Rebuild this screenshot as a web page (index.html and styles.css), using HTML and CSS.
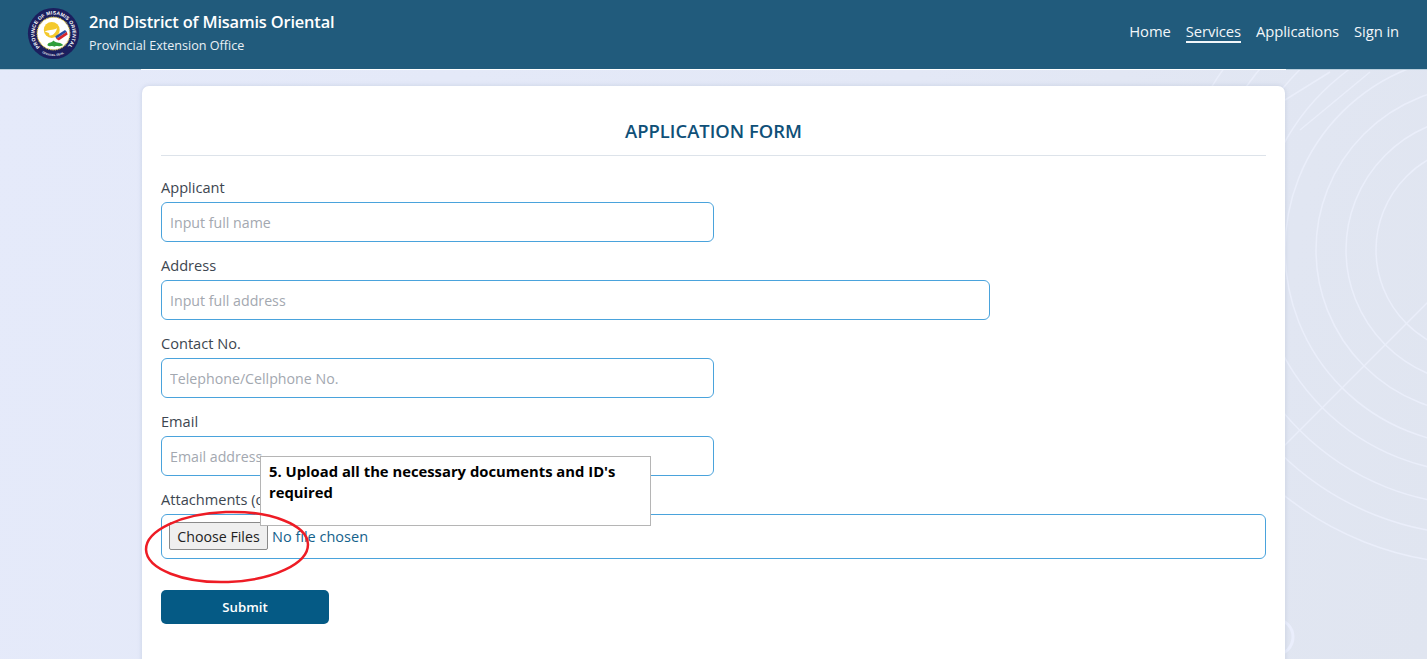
FILE: index.html
```html
<!DOCTYPE html>
<html lang="en">
<head>
<meta charset="utf-8">
<title>Application Form</title>
<link rel="stylesheet" href="styles.css">
</head>
<body>
<svg class="backdrop" viewBox="0 0 1427 659" aria-hidden="true">
  <g fill="none" stroke="#eaeefa" stroke-width="1.5">
    <circle cx="1480" cy="250" r="104"/><circle cx="1480" cy="250" r="134"/><circle cx="1480" cy="250" r="164"/>
    <circle cx="1480" cy="250" r="195"/><circle cx="1480" cy="250" r="223"/><circle cx="1480" cy="250" r="255"/>
    <circle cx="1480" cy="250" r="285"/><circle cx="1480" cy="250" r="314"/>
    <path d="M1270 460 L1480 250"/>
    <path d="M1285 100 L1330 72M1300 130 L1370 72"/>
  </g>
  <circle cx="1275" cy="637" r="18" fill="none" stroke="#eaeefc" stroke-width="3"/>
</svg>

<header class="topbar">
  <div class="brand">
    <svg class="logo" viewBox="0 0 60 60" role="img" aria-label="Province of Misamis Oriental seal">
      <defs>
        <path id="seal-top" d="M14.7 45.3 A21.6 21.6 0 1 1 45.3 45.3"/>
        <path id="seal-bottom" d="M11 47 A25.5 25.5 0 0 0 49 47"/>
      </defs>
      <circle cx="30" cy="30" r="29" fill="#1b1f5e"/>
      <circle cx="30" cy="30" r="18.5" fill="#fff" stroke="#f2d84a" stroke-width="1.5" stroke-dasharray="1 1"/>
      <text class="seal-text"><textPath href="#seal-top" textLength="100">PROVINCE OF MISAMIS ORIENTAL</textPath></text>
      <text class="seal-small"><textPath href="#seal-bottom" startOffset="18%" textLength="26">OFFICIAL SEAL</textPath></text>
      <circle cx="28" cy="26" r="9" fill="#f4c92c"/>
      <path d="M20 28 C24 25 29 27 34 24 C33 29 29 33 25 32 C26 30 25 29 20 28Z" fill="#fff"/>
      <path d="M33 36 L45 28 L46 31 L36 38Z" fill="#d8262c"/>
      <path d="M33 36 L45 28 L43 26 L32 33Z" fill="#2b4ea6"/>
      <path d="M23 43 C25 39 28 41 30 38 C32 41 36 39 41 43 C36 46 33 43 31 45 C28 43 26 46 23 43Z" fill="#2f9e3a"/>
    </svg>
    <div class="brand-text">
      <div class="brand-title">2nd District of Misamis Oriental</div>
      <div class="brand-sub">Provincial Extension Office</div>
    </div>
  </div>
  <nav class="nav">
    <a href="#">Home</a>
    <a href="#" class="active">Services</a>
    <a href="#">Applications</a>
    <a href="#">Sign in</a>
  </nav>
</header>

<main class="card">
  <h1 class="form-title">APPLICATION FORM</h1>
  <form class="form">
    <div class="field half">
      <label for="name">Applicant</label>
      <input id="name" type="text" placeholder="Input full name">
    </div>
    <div class="field wide">
      <label for="address">Address</label>
      <input id="address" type="text" placeholder="Input full address">
    </div>
    <div class="field half">
      <label for="contact">Contact No.</label>
      <input id="contact" type="text" placeholder="Telephone/Cellphone No.">
    </div>
    <div class="field half">
      <label for="email">Email</label>
      <input id="email" type="text" placeholder="Email address">
    </div>
    <div class="field">
      <label for="files">Attachments (optional)</label>
      <input id="files" class="file" type="file" multiple>
    </div>
    <button class="submit" type="button">Submit</button>
  </form>
</main>

<div class="callout">5. Upload all the necessary documents and ID's required</div>
<svg class="circle-mark" viewBox="0 0 170 80" aria-hidden="true">
  <ellipse cx="84" cy="40" rx="81" ry="35" transform="rotate(-2 84 40)" fill="none" stroke="#ee1c25" stroke-width="2.5"/>
</svg>
</body>
</html>
```
FILE: styles.css
```css
* { box-sizing: border-box; }
html, body { height: 100%; overflow: hidden; }
body {
  margin: 0;
  position: relative;
  font-family: "Open Sans", "Noto Sans", sans-serif;
  background: linear-gradient(100deg, #e5eafa 0%, #e3e8f6 60%, #e0e5f0 100%);
  color: #3d4650;
}
.backdrop { position: absolute; inset: 0; width: 1427px; height: 659px; }

.topbar {
  position: relative;
  height: 70px;
  display: flex;
  align-items: center;
  justify-content: space-between;
  padding: 0 28px 3px 27px;
  background: #215b7c;
  border-bottom: 1px solid #c8dbe8;
  border-image: linear-gradient(90deg, #b9cfdd 142px, #fff 142px, #fff 1285px, #b9cfdd 1285px) 1;
  color: #fff;
}
.brand { display: flex; align-items: center; gap: 9px; }
.logo { width: 53px; height: 53px; flex: none; }
.seal-text { font-family: "Liberation Sans", sans-serif; font-size: 5.6px; font-weight: 700; fill: #fff; }
.seal-small { font-family: "Liberation Sans", sans-serif; font-size: 3.2px; font-weight: 700; fill: #fff; }
.brand-title { font-size: 16.4px; font-weight: 600; line-height: 24px; letter-spacing: -.16px; }
.brand-sub { font-size: 12.6px; line-height: 20px; margin-top: 2px; color: #e9f0f5; }
.nav { display: flex; gap: 15px; font-size: 14.8px; letter-spacing: -.1px; margin-bottom: 2px; }
.nav a { color: #f2f6f9; text-decoration: none; padding: 0; line-height: 20px; border-bottom: 2px solid transparent; }
.nav a.active { border-bottom-color: #f2f6f9; }

.card {
  position: relative;
  width: 1143px;
  height: 700px;
  margin: 16px 0 0 142px;
  padding: 0 19px;
  background: #fff;
  border-radius: 7px;
  box-shadow: 0 0 4px rgba(120, 135, 170, .25);
}
.form-title {
  margin: 0;
  height: 70px;
  padding-top: 31px;
  text-align: center;
  font-size: 18.4px;
  line-height: 28px;
  font-weight: 600;
  color: #0f5078;
  border-bottom: 1px solid #dde3ea;
}
.form { padding-top: 19px; display: flex; flex-direction: column; align-items: flex-start; }
.field { width: 100%; margin-bottom: 11px; }
.field.half { width: 553px; }
.field.wide { width: 829px; }
.field label { display: block; height: 24px; margin-bottom: 3px; font-size: 14.6px; line-height: 24px; }
.field input {
  display: block;
  width: 100%;
  height: 40px;
  padding: 0 8px;
  font: 14.2px "Open Sans", "Noto Sans", sans-serif;
  color: #15628c;
  background: #fff;
  border: 1px solid #4aa3dc;
  border-radius: 6px;
  outline: none;
}
.field input::placeholder { color: #a3a8b0; opacity: 1; }
.field input.file { height: 45px; padding: 7px 7px; line-height: 28px; font-size: 14.5px; }
.file::file-selector-button {
  width: 99px;
  height: 28px;
  margin-right: 4px;
  padding: 0;
  font: 14.2px "Open Sans", "Noto Sans", sans-serif;
  color: #222;
  background: #efefef;
  border: 1px solid #8a8a8a;
  border-radius: 2px;
}
.submit {
  width: 168px;
  height: 34px;
  margin-top: 20px;
  font: 600 13.2px "Open Sans", "Noto Sans", sans-serif;
  color: #fff;
  background: #055a85;
  border: 0;
  border-radius: 5px;
}

.callout {
  position: absolute;
  left: 260px;
  top: 456px;
  width: 391px;
  height: 70px;
  padding: 4px 8px;
  background: #fff;
  border: 1px solid #b5b5b5;
  font-size: 14.8px;
  line-height: 21px;
  font-weight: 700;
  color: #000;
}
.circle-mark { position: absolute; left: 143px; top: 507px; width: 170px; height: 80px; }
```
